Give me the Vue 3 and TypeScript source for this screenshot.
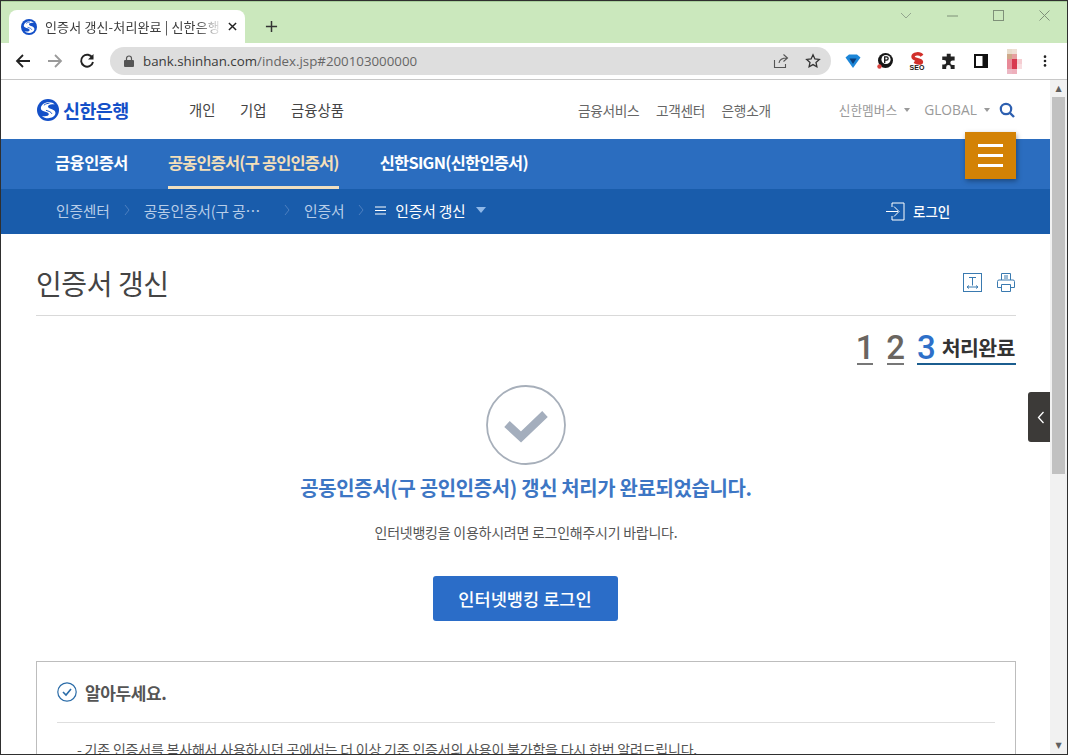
<script setup lang="ts">
const mainNav: string[] = ['개인', '기업', '금융상품']
const utilNav: string[] = ['금융서비스', '고객센터', '은행소개']
const avatarCells: string[] = [
  '#e8dccc', '#eedfd4', '#ffffff',
  '#cfa98a', '#e6a0a0', '#ffffff',
  '#e88a98', '#d8384f', '#f5cdd2',
  '#e88a98', '#d8384f', '#f8dde0',
  '#ecb8c4', '#eeb0bc', '#ffffff',
]
</script>

<template>
  <div class="window">
    <div class="chrome">
      <div class="tabbar">
        <div class="tab">
          <svg class="favicon" viewBox="0 0 16 16"><circle cx="8" cy="8" r="8" fill="#1450c8"/><path d="M2.800 6.300C4 1.500 11 1.500 12.800 4 10 3.400 8 4.300 8 5.600c0 1.800 6 1.400 5.400 5-.6 3.600-7 4.600-9.800 1.700 2.800.6 5 0 5-1.400C8.600 8.900 2.300 9.400 2.800 6.300z" fill="#fff"/><path d="M5 4.500c1.500-1.200 3-1.400 4-1.300M6.500 8.200c2 .7 4 1.200 4.300 2.600" fill="none" stroke="#1450c8" stroke-width=".7"/></svg>
          <span class="tab-title">인증서 갱신-처리완료 | 신한은행</span>
          <svg class="tab-x" viewBox="0 0 10 10"><path d="M1 1l8 8M9 1l-8 8" stroke="#222" stroke-width="1.600"/></svg>
        </div>
        <svg class="newtab" viewBox="0 0 14 14"><path d="M7 1v12M1 7h12" stroke="#333" stroke-width="1.600"/></svg>
        <div class="winctl">
          <svg width="12" height="8" viewBox="0 0 12 8"><path d="M1 1l5 5 5-5" fill="none" stroke="#93a58e"/></svg>
          <svg width="11" height="2" viewBox="0 0 11 2"><path d="M0 1h11" stroke="#7f9079"/></svg>
          <svg width="11" height="11" viewBox="0 0 11 11"><rect x=".5" y=".5" width="10" height="10" fill="none" stroke="#7f9079"/></svg>
          <svg width="11" height="11" viewBox="0 0 11 11"><path d="M.5.5l10 10M10.500.5l-10 10" stroke="#7f9079"/></svg>
        </div>
      </div>
      <div class="toolbar">
        <svg class="nav-ico" viewBox="0 0 16 16"><path d="M15 8H2M8 2L2 8l6 6" fill="none" stroke="#222" stroke-width="1.800"/></svg>
        <svg class="nav-ico" viewBox="0 0 16 16"><path d="M1 8h13M8 2l6 6-6 6" fill="none" stroke="#9a9a9a" stroke-width="1.800"/></svg>
        <svg class="nav-ico reload" viewBox="0 0 16 16"><path d="M13.500 5A6 6 0 1 0 14 9" fill="none" stroke="#222" stroke-width="1.900"/><path d="M14.500 1v5.500H9z" fill="#222"/></svg>
        <div class="omnibox">
          <svg class="lock" viewBox="0 0 10 12"><path d="M2.500 5V3.500a2.500 2.500 0 0 1 5 0V5" fill="none" stroke="#555" stroke-width="1.200"/><rect y="5" width="10" height="7" rx="1" fill="#555"/></svg>
          <span class="url"><span class="url-host">bank.shinhan.com</span>/index.jsp#200103000000</span>
          <svg class="omni-ico share" viewBox="0 0 16 16"><path d="M1.500 7v7.500h11V11M6 10c.5-3.500 3-5 8-5M10.500 1.500L14.500 5l-4 3.500" fill="none" stroke="#555" stroke-width="1.100"/></svg>
          <svg class="omni-ico star" viewBox="0 0 16 16"><path d="M8 1.800l1.900 4.100 4.400.5-3.300 3 .9 4.400L8 11.600l-3.900 2.200.9-4.400-3.300-3 4.400-.5z" fill="none" stroke="#333" stroke-width="1.300"/></svg>
        </div>
        <div class="exts">
          <svg class="ext" viewBox="0 0 18 18"><path d="M1.500 5.500L5 2.500h8l3.500 3L9 16z" fill="#1c86d8"/><path d="M5.500 6.500h7L9 12z" fill="#0b3d7a"/></svg>
          <svg class="ext" viewBox="0 0 18 18"><circle cx="9.500" cy="8.500" r="7.500" fill="#161616"/><circle cx="10" cy="7.500" r="4.600" fill="#fff"/><path d="M8.700 11V4.800h1.800a1.600 1.600 0 0 1 0 3.300H8.700" fill="none" stroke="#161616" stroke-width="1.300"/><circle cx="3.500" cy="14.500" r="2.200" fill="#d9413c"/></svg>
          <svg class="ext" viewBox="0 0 18 18"><path d="M14 3.800C12 .8 5 1.300 5 4.800c0 3.500 8.500 2.200 8.500 5.200 0 1.500-4 1.300-7-.5" fill="none" stroke="#d12f2a" stroke-width="3.400"/><text x="9" y="17.500" class="seo" text-anchor="middle">SEO</text></svg>
          <svg class="ext" viewBox="0 0 16 16"><path d="M6 1.500h3.500V4H13v3.500h-1.800a2 2 0 0 0 0 4H13V15H9.500v-1.500a2 2 0 0 0-4 0V15H2v-4h1.500a2 2 0 0 0 0-4H2V4h4z" fill="#222"/></svg>
          <svg class="ext" viewBox="0 0 18 18"><rect x="2" y="2" width="14" height="14" fill="#111"/><rect x="4" y="4" width="6.500" height="10" fill="#fff"/></svg>
          <div class="avatar"><i v-for="(c, n) in avatarCells" :key="n" :style="{ background: c }"></i></div>
          <svg class="dots" viewBox="0 0 4 16"><circle cx="2" cy="3" r="1.500" fill="#222"/><circle cx="2" cy="8" r="1.500" fill="#222"/><circle cx="2" cy="13" r="1.500" fill="#222"/></svg>
        </div>
      </div>
    </div>

    <div class="viewport">
      <div class="page">
        <header class="gnb">
          <div class="logo">
            <svg width="22" height="22" viewBox="0 0 16 16"><circle cx="8" cy="8" r="8" fill="#1450c8"/><path d="M2.800 6.300C4 1.500 11 1.500 12.800 4 10 3.400 8 4.300 8 5.600c0 1.800 6 1.400 5.400 5-.6 3.600-7 4.600-9.800 1.700 2.800.6 5 0 5-1.400C8.600 8.900 2.300 9.400 2.800 6.300z" fill="#fff"/><path d="M5 4.500c1.500-1.200 3-1.400 4-1.300M6.500 8.200c2 .7 4 1.200 4.300 2.600" fill="none" stroke="#1450c8" stroke-width=".7"/></svg>
            <span>신한은행</span>
          </div>
          <nav class="main-nav"><a v-for="m in mainNav" :key="m">{{ m }}</a></nav>
          <nav class="util-nav"><a v-for="u in utilNav" :key="u">{{ u }}</a></nav>
          <div class="global">
            <span>신한멤버스</span><i class="caret"></i>
            <span class="g-en">GLOBAL</span><i class="caret"></i>
            <svg class="search" viewBox="0 0 16 16"><circle cx="7" cy="7" r="5.200" fill="none" stroke="#2d5fb0" stroke-width="2.200"/><path d="M10.500 10.500L15 15" stroke="#2d5fb0" stroke-width="2.400"/></svg>
          </div>
        </header>

        <div class="tabs-band">
          <a class="band-link">금융인증서</a>
          <a class="band-link active">공동인증서(구 공인인증서)</a>
          <a class="band-link last">신한SIGN(신한인증서)</a>
        </div>
        <div class="crumb-band">
          <span class="c c1">인증센터</span>
          <svg class="chev" viewBox="0 0 6 12"><path d="M1 1l4 5-4 5" fill="none" stroke="#4d7fc0"/></svg>
          <span class="c c2">공동인증서(구 공…</span>
          <svg class="chev chev2" viewBox="0 0 6 12"><path d="M1 1l4 5-4 5" fill="none" stroke="#4d7fc0"/></svg>
          <span class="c c3">인증서</span>
          <svg class="chev chev3" viewBox="0 0 6 12"><path d="M1 1l4 5-4 5" fill="none" stroke="#4d7fc0"/></svg>
          <svg class="burger-sm" viewBox="0 0 11 9"><path d="M0 1h11M0 4.500h11M0 8h11" stroke="#fff" stroke-width="1.200"/></svg>
          <span class="c-cur">인증서 갱신</span>
          <i class="c-caret"></i>
          <div class="login-link">
            <svg width="20" height="19" viewBox="0 0 20 19"><path d="M6 5V1h12v17H6v-4M0 9.500h12M8 4.500l5 5-5 5" fill="none" stroke="#fff" stroke-width="1"/></svg>
            <span>로그인</span>
          </div>
        </div>

        <div class="menu-btn"><i></i><i></i><i></i></div>
        <div class="side-handle">
          <svg width="8" height="13" viewBox="0 0 8 13"><path d="M6.500 1L1.500 6.500l5 5.500" fill="none" stroke="#fff" stroke-width="1.300"/></svg>
        </div>

        <main class="content">
          <div class="title-row">
            <h1>인증서 갱신</h1>
            <div class="title-tools">
              <svg width="19" height="19" viewBox="0 0 19 19"><rect x=".5" y=".5" width="18" height="18" fill="none" stroke="#3a7ab0"/><path d="M6 4.500h7M9.500 4.500v8M4 14h11M4 14l2-1.500M4 14l2 1.500M15 14l-2-1.500M15 14l-2 1.500" fill="none" stroke="#3a7ab0"/></svg>
              <svg width="18" height="19" viewBox="0 0 18 19"><path d="M4.500 7V.5h9V7M4.500 14.500H.5V8.500a1.500 1.500 0 0 1 1.500-1.500h14a1.500 1.500 0 0 1 1.500 1.500v6h-4M4.500 11.500h9v7h-9zM7 3h4M7 5h4" fill="none" stroke="#3a7ab0"/></svg>
            </div>
          </div>
          <div class="steps">
            <span class="step s1">1</span>
            <span class="step s2">2</span>
            <span class="step now"><b>3</b><em>처리완료</em></span>
          </div>
          <div class="result">
            <svg width="80" height="80" viewBox="0 0 80 80"><circle cx="40" cy="40" r="39" fill="#fff" stroke="#a7afba" stroke-width="1.800"/><path d="M21 39l14 13 24-23" fill="none" stroke="#a4aebd" stroke-width="8"/></svg>
            <h2>공동인증서(구 공인인증서) 갱신 처리가 완료되었습니다.</h2>
            <p>인터넷뱅킹을 이용하시려면 로그인해주시기 바랍니다.</p>
            <button type="button">인터넷뱅킹 로그인</button>
          </div>
          <section class="notice">
            <div class="notice-head">
              <svg width="20" height="20" viewBox="0 0 20 20"><circle cx="10" cy="10" r="9.200" fill="none" stroke="#2b6ca8" stroke-width="1.200"/><path d="M6 10l3 3 5-6" fill="none" stroke="#2b6ca8" stroke-width="1.600"/></svg>
              <span>알아두세요.</span>
            </div>
            <p>- 기존 인증서를 복사해서 사용하시던 곳에서는 더 이상 기존 인증서의 사용이 불가함을 다시 한번 알려드립니다.</p>
          </section>
        </main>
      </div>
      <div class="scrollbar">
        <div class="sb-arrow">▲</div>
        <div class="sb-track"><div class="sb-thumb"></div></div>
        <div class="sb-arrow">▼</div>
      </div>
    </div>
  </div>
</template>

<style>
html, body { margin: 0; height: 100%; overflow: hidden; background: #fff; }
</style>

<style scoped>
* { box-sizing: border-box; }
.window {
  width: 1068px; height: 755px; display: flex; flex-direction: column; overflow: hidden;
  border: 1px solid #2f2f2f;
  font-family: "Noto Sans CJK KR", "Noto Sans", sans-serif; color: #444;
}
.chrome { flex: none; height: 79px; border-bottom: 1px solid #c8c8c8; background: #fff; }
.tabbar { height: 42px; background: #cbe8bd; display: flex; align-items: flex-end; position: relative; padding-left: 8px; border-top: 1px solid #a9cf9c; }
.tab { width: 236px; height: 33px; background: #fff; border-radius: 8px 8px 0 0; display: flex; align-items: center; padding-left: 12px; }
.favicon { width: 16px; height: 16px; flex: none; }
.tab-title { margin-left: 8px; width: 178px; font-size: 13px; white-space: nowrap; overflow: hidden; color: #3d3d3d; letter-spacing: .15px; -webkit-mask-image: linear-gradient(90deg, #000 85%, transparent); mask-image: linear-gradient(90deg, #000 85%, transparent); }
.tab-x { width: 9px; height: 9px; margin-left: 5px; flex: none; }
.newtab { width: 13px; height: 13px; margin: 0 0 10px 20px; }
.winctl { position: absolute; right: 17px; top: 8px; display: flex; align-items: center; gap: 35px; }
.toolbar { height: 36px; display: flex; align-items: center; padding-left: 14px; }
.nav-ico { width: 16px; height: 16px; margin-right: 16px; flex: none; }
.nav-ico.reload { margin-right: 15px; }
.omnibox { width: 721px; height: 28px; border-radius: 14px; background: #dedede; display: flex; align-items: center; padding-left: 14px; flex: none; }
.lock { width: 10px; height: 12px; flex: none; }
.url { margin-left: 9px; font: 13.3px "Open Sans", sans-serif; color: #666; flex: 1; white-space: nowrap; }
.url-host { color: #3a3a3a; }
.omni-ico { width: 16px; height: 16px; flex: none; }
.share { margin-right: 16px; }
.star { margin-right: 10px; }
.exts { display: flex; align-items: center; margin-left: 13px; }
.ext { width: 18px; height: 18px; flex: none; margin-right: 14px; }
.seo { font: 700 7px "Liberation Sans", sans-serif; fill: #1e1412; }
.avatar { width: 15px; height: 25px; display: grid; grid-template-columns: repeat(3, 5px); grid-auto-rows: 5px; margin: 0 21px 0 3px; flex: none; }
.dots { width: 4px; height: 14px; flex: none; }
.viewport { flex: 1; display: flex; min-height: 0; }
.page { width: 1049px; position: relative; overflow: hidden; background: #fff; flex: none; }
.scrollbar { flex: 1; background: #f1f1f1; display: flex; flex-direction: column; }
.sb-arrow { height: 17px; font-size: 8px; text-align: center; line-height: 17px; color: #606060; font-family: "DejaVu Sans", sans-serif; }
.sb-track { flex: 1; }
.sb-thumb { height: 377px; background: #c1c1c1; margin: 0 2px; }

.gnb { height: 59px; display: flex; align-items: center; }
.logo { margin-left: 36px; width: 130px; display: flex; align-items: center; gap: 4px; font-size: 18.5px; font-weight: 700; color: #1450c8; letter-spacing: -.6px; flex: none; }
.main-nav { display: flex; gap: 24.5px; margin-left: 22px; flex: none; }
.main-nav a { font-size: 14.4px; color: #444; }
.util-nav { display: flex; gap: 16.5px; margin-left: 234px; flex: none; }
.util-nav a { font-size: 13.7px; color: #666; letter-spacing: -.3px; }
.global { display: flex; align-items: center; margin-left: 68px; font-size: 12.7px; color: #9a9a9a; flex: none; }
.g-en { font: 13.8px "Open Sans", sans-serif; margin-left: 14px; }
.caret { width: 0; height: 0; border: 3.500px solid transparent; border-top: 4px solid #9a9a9a; border-bottom: 0; margin-left: 7px; }
.search { width: 16px; height: 16px; margin-left: 9px; }

.tabs-band { height: 50px; background: #2b6dbf; display: flex; padding-left: 54px; gap: 40px; }
.band-link { height: 50px; line-height: 47px; font-size: 16.4px; font-weight: 700; color: #fff; letter-spacing: -.5px; white-space: nowrap; }
.band-link.active { color: #f3dfb9; border-bottom: 3px solid #f0dfc0; letter-spacing: -.8px; margin-right: 1px; }
.band-link.last { letter-spacing: -.72px; }
.crumb-band { height: 45px; background: #195cab; display: flex; align-items: center; padding: 0 0 3px 55px; position: relative; color: #b7cde8; font-size: 14.8px; }
.c { white-space: nowrap; letter-spacing: -.2px; }
.chev { width: 6px; height: 12px; margin: 0 14px; flex: none; }
.chev2 { margin: 0 14px 0 24px; }
.chev3 { margin: 0 11px 0 14px; }
.burger-sm { width: 11px; height: 9px; flex: none; }
.c-cur { margin-left: 9px; color: #fff; letter-spacing: -.2px; }
.c-caret { margin-left: 10px; width: 0; height: 0; border: 5px solid transparent; border-top: 6px solid #8fb8e8; border-bottom: 0; }
.login-link { position: absolute; left: 885px; top: 12px; display: flex; align-items: center; gap: 7px; color: #fff; font-size: 13.5px; font-weight: 500; }

.menu-btn { position: absolute; left: 964px; top: 52px; width: 51px; height: 47px; background: #d38205; box-shadow: 1px 2px 5px rgba(0,0,0,.35); display: flex; flex-direction: column; align-items: center; justify-content: center; gap: 7px; }
.menu-btn i { width: 25px; height: 3px; background: #fff; }
.side-handle { position: absolute; left: 1027px; top: 312px; width: 22px; height: 50px; background: #3c3a38; border-radius: 3px 0 0 3px; display: flex; align-items: center; justify-content: center; padding-left: 4px; }

.content { padding: 0 34px 0 35px; }
.title-row { height: 82px; border-bottom: 1px solid #d9d9d9; display: flex; justify-content: space-between; align-items: center; padding-top: 19px; }
h1 { margin: -3px 0 0; font-size: 28px; font-weight: 400; color: #444; letter-spacing: -.4px; }
.title-tools { display: flex; gap: 15px; margin: -3px 1px 0 0; }
.steps { display: flex; justify-content: flex-end; height: 49px; align-items: flex-end; }
.step { height: 34px; border-bottom: 2px solid #777; font: 500 33px/33px "Roboto", sans-serif; color: #6a6560; display: flex; justify-content: center; }
.s1 { width: 16px; }
.s2 { width: 17px; margin-left: 14px; }
.step.now { width: 99px; margin-left: 13px; border-bottom-color: #1b5d8f; justify-content: flex-start; gap: 6px; color: #2e70c9; }
.step.now b { font-weight: 500; }
.step.now em { font: 700 20.5px/32px "Noto Sans CJK KR", sans-serif; color: #333; letter-spacing: -.6px; white-space: nowrap; }
.result { display: flex; flex-direction: column; align-items: center; margin-top: 20px; }
.result h2 { margin: 4px 0 0; height: 38px; font-size: 19.9px; line-height: 38px; font-weight: 700; color: #3d76c4; letter-spacing: -.3px; }
.result p { margin: 15px 0 0; font-size: 14px; line-height: 20px; color: #555; letter-spacing: -.25px; }
.result button { margin: 34px 2px 0 0; width: 185px; height: 45px; background: #2b6dc8; border: 0; border-radius: 3px; color: #fff; font: 500 17.6px "Noto Sans CJK KR", sans-serif; }
.notice { margin-top: 40px; border: 1px solid #bdbdbd; padding: 0 20px; height: 200px; }
.notice-head { height: 61px; border-bottom: 1px solid #dedede; display: flex; align-items: center; gap: 8px; font-size: 17px; font-weight: 700; color: #555; letter-spacing: -.4px; }
.notice p { margin: 16px 0 0 20px; font-size: 14px; line-height: 20px; color: #555; white-space: nowrap; letter-spacing: -.2px; }
</style>
